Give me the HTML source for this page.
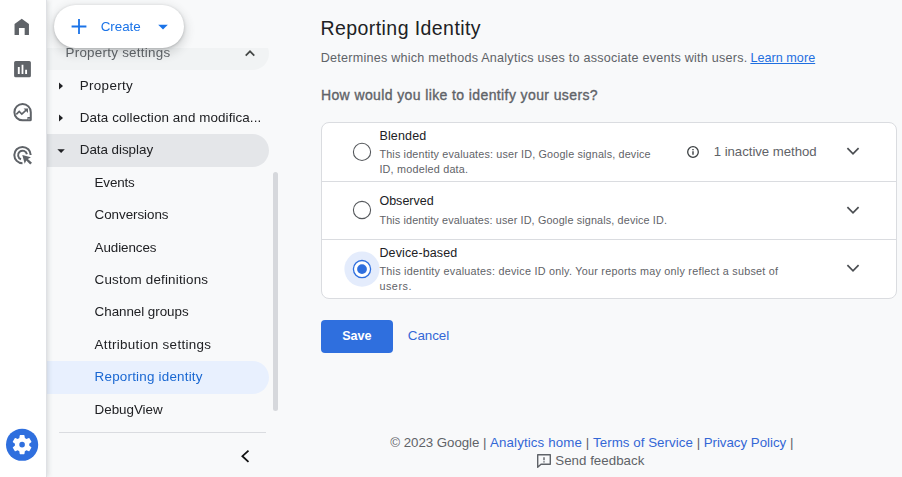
<!DOCTYPE html>
<html lang="en">
<head>
<meta charset="utf-8">
<title>Reporting Identity</title>
<style>
*{box-sizing:border-box;margin:0;padding:0}
html,body{width:902px;height:477px;overflow:hidden;background:#f8f9fa;font-family:"Liberation Sans",Arial,sans-serif;color:#202124}
.abs{position:absolute}
#rail{position:absolute;left:0;top:0;width:46px;height:477px;background:#fff;z-index:5;box-shadow:1px 0 0 #dfe1e5,2px 0 5px rgba(60,64,67,.180)}
#nav{position:absolute;left:47px;top:0;width:233px;height:477px;will-change:transform}
.row{position:absolute;left:0;width:222px;height:33px;border-radius:0 16.5px 16.5px 0}
.t{position:absolute;white-space:nowrap;line-height:16px;font-size:13.4px;color:#202124}
.sub{left:47px}
#create{position:absolute;left:7px;top:4.500px;width:130px;height:43.500px;border-radius:22px;background:#fff;box-shadow:0 1px 3px rgba(60,64,67,.3),0 4px 8px 3px rgba(60,64,67,.15)}
#main{position:absolute;left:280px;top:0;width:622px;height:477px}
a{color:#1a56c4}
.card{position:absolute;left:321px;top:122px;width:576px;height:177px;border:1px solid #dadce0;border-radius:8px;background:#fff}
.sep{position:absolute;width:574px;height:1px;background:#dadce0}
.radio{position:absolute;width:18px;height:18px;border-radius:50%;border:1.5px solid #5f6368;background:#fff}
.ot{position:absolute;font-size:12.5px;color:#202124;white-space:nowrap;line-height:15px}
.od{position:absolute;font-size:10.8px;color:#5f6368;line-height:15px;white-space:nowrap}
.ft{font-size:13.300px;color:#5f6368}
.lk{color:#3367d6}
</style>
</head>
<body>
<div id="rail">
<svg class="abs" style="left:0;top:0" width="46" height="477" viewBox="0 0 46 477">
  <!-- home -->
  <path d="M14.550 34.950V23.900L21.750 18.700L28.950 23.900V34.950H24.670V27.960H18.970V34.950Z" fill="#5f6368"/>
  <!-- reports -->
  <path fill="#5f6368" fill-rule="evenodd" d="M15.700 60.900H29.300A1.600 1.600 0 0 1 30.900 62.500V75.700A1.600 1.600 0 0 1 29.300 77.300H15.700A1.600 1.600 0 0 1 14.100 75.700V62.500A1.600 1.600 0 0 1 15.700 60.900ZM17.850 67V73.950H19.750V67ZM21.600 64.800V73.950H23.400V64.800ZM25.150 69.800V73.950H27.050V69.800Z"/>
  <!-- explore -->
  <g fill="none" stroke="#5f6368">
    <path d="M22.600 103.950A8.200 8.200 0 1 0 22.600 120.350H30.100A.7.700 0 0 0 30.800 119.650V112.150A8.200 8.200 0 0 0 22.600 103.950Z" stroke-width="2"/>
    <path d="M16.300 114.400L19.200 111.500L21.800 114.100L26.400 109.800" stroke-width="1.700"/>
    <path d="M23.600 108.500H28V112.900Z" fill="#5f6368" stroke="none"/>
    <path d="M27.400 117H31V120.600H27.400Z" fill="#5f6368" stroke="none"/>
    <path d="M28.400 118.400H29.500V119.500H28.400Z" fill="#e3e4e6" stroke="none"/>
  </g>
  <!-- advertising -->
  <g fill="none" stroke="#5f6368" stroke-width="2">
    <path d="M30.700 155.100A8.200 8.200 0 1 0 22.500 163.300"/>
    <path d="M26.900 154.300A4.450 4.450 0 1 0 21 159.300"/>
  </g>
  <path d="M22.300 154.900L30.900 157.300L27.900 158.900L32 162.700L30.200 164.500L26.300 160.600L24.700 163.700Z" fill="#5f6368"/>
  <!-- admin -->
  <circle cx="22.100" cy="444.750" r="16.100" fill="#2f6fde"/>
  <g transform="translate(10.600 433.150) scale(0.958)">
  <path fill="#fff" fill-rule="evenodd" d="M19.430 12.980c.040-.320.070-.640.070-.980s-.030-.660-.070-.980l2.110-1.650a.5.5 0 0 0 .12-.640l-2-3.460a.5.5 0 0 0-.61-.22l-2.490 1a7.300 7.300 0 0 0-1.690-.98l-.380-2.650A.49.490 0 0 0 14 2h-4a.49.490 0 0 0-.49.420l-.380 2.650c-.610.250-1.170.590-1.690.980l-2.490-1a.5.500 0 0 0-.61.220l-2 3.460a.5.500 0 0 0 .12.640l2.110 1.650c-.040.320-.070.650-.070.980s.030.660.070.980l-2.110 1.650a.5.500 0 0 0-.12.640l2 3.460c.12.220.390.300.610.220l2.490-1c.52.400 1.080.730 1.690.980l.380 2.650c.03.240.24.420.49.420h4c.25 0 .46-.18.490-.42l.380-2.650a7.300 7.300 0 0 0 1.690-.98l2.490 1c.23.090.49 0 .61-.22l2-3.460a.5.500 0 0 0-.12-.640zM12 14.900A2.900 2.900 0 1 1 12 9.100a2.900 2.900 0 0 1 0 5.800z"/>
  </g>
</svg>
</div>

<div id="nav">
  <div class="abs" style="left:0;top:48px;width:233px;height:40px;overflow:hidden">
    <div class="row" style="top:-11px;background:#f1f3f4"></div>
  </div>
  <div class="t" id="n_ps" style="letter-spacing:0.260px;left:18.50px;top:45px;color:#5f6368">Property settings</div>
  <svg class="abs" style="left:195.700px;top:45.700px" width="14" height="14" viewBox="0 0 14 14" fill="none" stroke="#444746" stroke-width="1.700"><path d="M2.700 9.600L7 5.300l4.300 4.300"/></svg>

  <div id="create">
    <svg class="abs" style="left:0;top:0" width="130" height="44" viewBox="0 0 130 44"><path d="M24.100 14.100h1.800v6.500h6.500v1.800h-6.500v6.500h-1.800v-6.500h-6.500v-1.800h6.500z" fill="#1a73e8"/><path d="M104.200 19.700l4.800 4.900l4.800-4.900z" fill="#1a73e8"/></svg>
    <div class="t" id="n_create" style="letter-spacing:-0.025px;left:46.66px;top:14.500px;color:#1a73e8">Create</div>
  </div>

  <svg class="abs" style="left:10.200px;top:80.700px" width="8" height="10" viewBox="0 0 8 10"><path d="M2 1.500l4 3.500-4 3.500z" fill="#202124"/></svg>
  <div class="t" id="n_prop" style="letter-spacing:0.339px;left:32.75px;top:78px">Property</div>
  <svg class="abs" style="left:10.200px;top:112.700px" width="8" height="10" viewBox="0 0 8 10"><path d="M2 1.500l4 3.500-4 3.500z" fill="#202124"/></svg>
  <div class="t" id="n_dc" style="letter-spacing:0.094px;left:32.75px;top:110px">Data collection and modifica...</div>

  <div class="row" style="top:134px;background:#e4e6e9"></div>
  <svg class="abs" style="left:9px;top:147.300px" width="10" height="8" viewBox="0 0 10 8"><path d="M1.400 2.200h7.400L5.100 5.900z" fill="#202124"/></svg>
  <div class="t" id="n_dd" style="letter-spacing:-0.033px;left:32.75px;top:142px">Data display</div>

  <div class="t" id="n_ev" style="letter-spacing:-0.165px;left:47.60px;top:175px">Events</div>
  <div class="t" id="n_cv" style="letter-spacing:-0.055px;left:47.60px;top:207px">Conversions</div>
  <div class="t" id="n_au" style="letter-spacing:-0.082px;left:47.60px;top:240px">Audiences</div>
  <div class="t" id="n_cd" style="letter-spacing:0.189px;left:47.60px;top:272px">Custom definitions</div>
  <div class="t" id="n_cg" style="letter-spacing:-0.041px;left:47.60px;top:304px">Channel groups</div>
  <div class="t" id="n_as" style="letter-spacing:0.331px;left:47.60px;top:337px">Attribution settings</div>
  <div class="row" style="top:361px;background:#e8f0fe"></div>
  <div class="t" id="n_ri" style="letter-spacing:0.215px;left:47.60px;top:369px;color:#1967d2">Reporting identity</div>
  <div class="t" id="n_dv" style="letter-spacing:-0.035px;left:47.60px;top:402px">DebugView</div>

  <div class="abs" style="left:226px;top:172px;width:5px;height:239px;border-radius:2.500px;background:#d6d8dc"></div>
  <div class="abs" style="left:12px;top:432px;width:207px;height:1px;background:#dadce0"></div>
  <svg class="abs" style="left:192px;top:449px" width="14" height="16" viewBox="0 0 14 16" fill="none" stroke="#111" stroke-width="1.800"><path d="M9.500 1.600L3.400 7.200l6.100 5.600"/></svg>
</div>

<div id="main">
</div>
<div class="t" id="m_title" style="letter-spacing:0.422px;left:320.56px;top:16px;font-size:19.500px;line-height:24px;color:#202124">Reporting Identity</div>
<div class="t" id="m_desc" style="letter-spacing:0.234px;left:320.69px;top:50px;font-size:12.600px;color:#5f6368">Determines which methods Analytics uses to associate events with users.</div>
<div class="t" id="m_learn" style="letter-spacing:0.039px;left:750.40px;top:50px;font-size:12.600px;color:#1f6fe0;text-decoration:underline">Learn more</div>
<div class="t" id="m_head" style="letter-spacing:0.390px;left:320.94px;top:87px;font-size:14px;color:#5f6368;-webkit-text-stroke:0.350px #5f6368">How would you like to identify your users?</div>

<div class="card"></div>
<div class="sep" style="left:322px;top:181px"></div>
<div class="sep" style="left:322px;top:239px"></div>

<svg class="abs" style="left:342px;top:132px" width="40" height="40" viewBox="0 0 40 40"><circle cx="20" cy="19.900" r="8.600" fill="#fff" stroke="#55585c" stroke-width="1.100"/></svg>
<div class="ot" id="c_b" style="letter-spacing:0.157px;left:379.40px;top:129px">Blended</div>
<div class="od" id="c_b1" style="letter-spacing:0.162px;left:379.40px;top:147px">This identity evaluates: user ID, Google signals, device</div>
<div class="od" id="c_b2" style="letter-spacing:0.213px;left:379.40px;top:162px">ID, modeled data.</div>
<svg class="abs" style="left:686px;top:144.600px" width="14" height="14" viewBox="0 0 14 14" fill="none" stroke="#3c4043" stroke-width="1.300"><circle cx="7" cy="7" r="5.300"/><path d="M7 6.200v3.600M7 3.900v1.300" stroke-width="1.400"/></svg>
<div class="ot" id="c_inact" style="letter-spacing:-0.024px;left:713.71px;top:144px;font-size:13.200px;color:#5f6368">1 inactive method</div>
<svg class="abs" style="left:846px;top:144.100px" width="14" height="14" viewBox="0 0 14 14" fill="none" stroke="#4a4d51" stroke-width="1.700"><path d="M1.400 4.200l5.600 5.600 5.600-5.600"/></svg>

<svg class="abs" style="left:342px;top:190px" width="40" height="40" viewBox="0 0 40 40"><circle cx="20" cy="20" r="8.600" fill="#fff" stroke="#55585c" stroke-width="1.100"/></svg>
<div class="ot" id="c_o" style="letter-spacing:0.022px;left:379.40px;top:194px">Observed</div>
<div class="od" id="c_o1" style="letter-spacing:0.143px;left:379.40px;top:213px">This identity evaluates: user ID, Google signals, device ID.</div>
<svg class="abs" style="left:846px;top:203.100px" width="14" height="14" viewBox="0 0 14 14" fill="none" stroke="#4a4d51" stroke-width="1.700"><path d="M1.400 4.200l5.600 5.600 5.600-5.600"/></svg>

<svg class="abs" style="left:341.500px;top:249px" width="40" height="40" viewBox="0 0 40 40"><circle cx="20" cy="20.100" r="17.600" fill="#e4ecfc"/><circle cx="20" cy="20.100" r="8.600" fill="#fff" stroke="#2f6fde" stroke-width="1.300"/><circle cx="20" cy="20.100" r="4.900" fill="#2f6fde"/></svg>
<div class="ot" id="c_d" style="letter-spacing:0.131px;left:379.40px;top:246px">Device-based</div>
<div class="od" id="c_d1" style="letter-spacing:0.249px;left:379.40px;top:264px">This identity evaluates: device ID only. Your reports may only reflect a subset of</div>
<div class="od" id="c_d2" style="letter-spacing:0.539px;left:379.40px;top:279px">users.</div>
<svg class="abs" style="left:846px;top:261.100px" width="14" height="14" viewBox="0 0 14 14" fill="none" stroke="#4a4d51" stroke-width="1.700"><path d="M1.400 4.200l5.600 5.600 5.600-5.600"/></svg>

<div class="abs" style="left:321px;top:320px;width:72px;height:33px;border-radius:4px;background:#2f6fde"></div>
<div class="t" id="b_save" style="letter-spacing:-0.009px;left:342.15px;top:328px;color:#fff;font-weight:bold;font-size:12.600px">Save</div>
<div class="t" id="b_cancel" style="letter-spacing:-0.064px;left:407.85px;top:328px;color:#3367d6;font-size:13.400px">Cancel</div>

<div class="t ft" id="f1" style="letter-spacing:-0.045px;left:390.30px;top:435px">© 2023 Google |</div>
<div class="t ft" id="f2" style="letter-spacing:0.123px;left:490.06px;top:435px"><span class="lk">Analytics home</span> |</div>
<div class="t ft" id="f3" style="letter-spacing:0.055px;left:593.00px;top:435px"><span class="lk">Terms of Service</span> |</div>
<div class="t ft" id="f4" style="letter-spacing:-0.010px;left:703.63px;top:435px"><span class="lk">Privacy Policy</span> |</div>
<svg class="abs" style="left:536px;top:453px" width="16" height="16" viewBox="0 0 16 16" fill="none" stroke="#5f6368" stroke-width="1.400"><path d="M1.700 1.700h12.600v9.600H5l-3.300 3z" stroke-linejoin="round"/><path d="M8 4.200v3M8 8.300v1.200"/></svg>
<div class="t ft" id="f5" style="letter-spacing:0.028px;left:555.25px;top:453px">Send feedback</div>
</body>
</html>
